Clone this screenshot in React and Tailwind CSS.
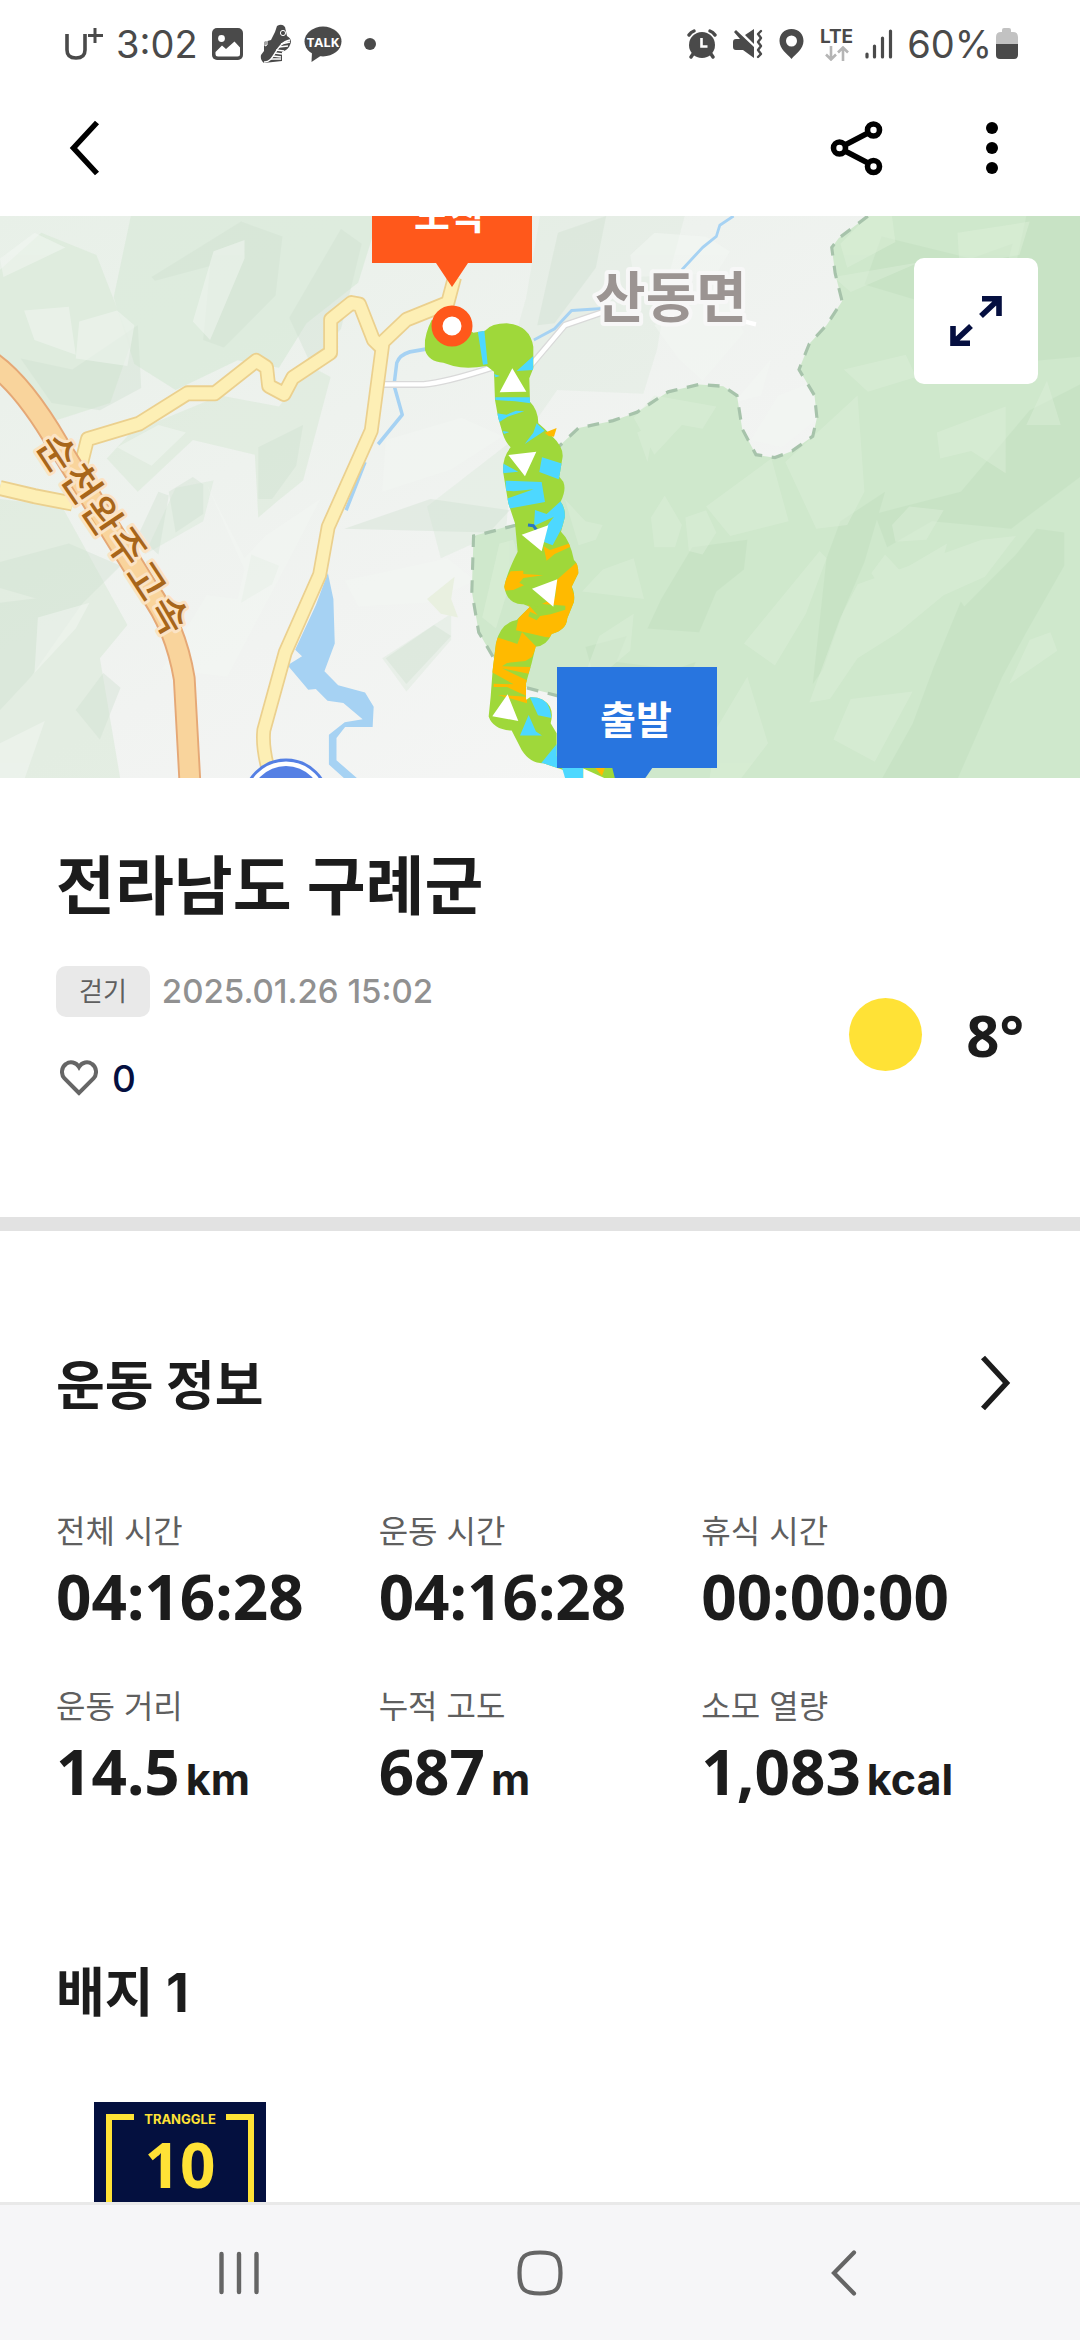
const SANS = "font-['Inter','Noto_Sans_CJK_KR',sans-serif]";

const stats = [
  { label: '전체 시간', value: '04:16:28' },
  { label: '운동 시간', value: '04:16:28' },
  { label: '휴식 시간', value: '00:00:00' },
  { label: '운동 거리', value: '14.5', unit: 'km' },
  { label: '누적 고도', value: '687', unit: 'm' },
  { label: '소모 열량', value: '1,083', unit: 'kcal' },
];

const highwayName = [
  ['순', 57, 237, 57],
  ['천', 81, 268, 56],
  ['완', 102, 300, 56],
  ['주', 126, 331, 55],
  ['고', 146, 365, 57],
  ['속', 169, 399, 60],
];

function StatusBar() {
  return (
    <div className="flex h-20 items-center justify-between pt-2 pr-[62px] pl-16 font-['Inter',sans-serif] text-[#4a4a4a]">
      <div className="flex items-center">
        <svg width="40" height="36" viewBox="0 0 40 36" fill="none" stroke="currentColor" role="img" aria-label="U+">
          <path d="M3 8v16c0 5 3 8 9 8s9-3 9-8V8" strokeWidth="3.6" />
          <path d="M31 2v15M24 9.500h15" strokeWidth="3" />
        </svg>
        <span className="ml-3 w-24 text-[38px] leading-none">3:02</span>
        <svg width="32" height="32" viewBox="0 0 32 32" aria-hidden="true">
          <rect width="31" height="32" rx="5" fill="currentColor" />
          <circle cx="9.500" cy="10.500" r="3.400" fill="#fff" />
          <path d="M3.500 24 10 17.500l4 3.500 8.500-7.500 5.500 6V26q0 2.500-2.500 2.500H6Q3.500 28.500 3.500 26z" fill="#fff" />
        </svg>
        <svg className="ml-4" width="32" height="40" viewBox="0 0 32 40" aria-hidden="true">
          <path d="M17 2q5-3 8 1l2 9q4 2 4 6-1 5-5 8l-4 2 0 9-18 2q-4-3-3-8l3-4 0-9 7-2 4-8z" fill="currentColor" />
          <path d="M4 38c11 1 11-19 26-22" stroke="#fff" strokeWidth="1.400" fill="none" />
          <path d="M5 18v4l2-1v-4" stroke="#fff" strokeWidth="1" fill="none" />
          <circle cx="23" cy="9" r="2.600" fill="none" stroke="#fff" />
          <path d="m21 20 9-2m-11 5 9-1m-12 4 8 1m-9 2 7 1m-9 2 8 1m-10 2 10 0" stroke="#fff" strokeWidth="1.500" />
        </svg>
        <svg className="ml-3" width="38" height="38" viewBox="0 0 38 38" aria-label="카카오톡" role="img">
          <ellipse cx="19" cy="16.500" rx="18.500" ry="15" fill="currentColor" />
          <path d="M8 27 7.500 37 18 30z" fill="currentColor" />
          <text x="19" y="21.500" textAnchor="middle" fill="#fff" className="font-['Open_Sans',sans-serif] text-[13px] font-bold">TALK</text>
        </svg>
        <span className="ml-[22px] size-3 rounded-full bg-current" />
      </div>
      <div className="flex items-center">
        <svg width="30" height="30" viewBox="0 0 30 30" fill="none" aria-hidden="true">
          <circle cx="15" cy="16" r="13" fill="currentColor" />
          <path d="M2 6q2-3 5-4M28 6q-2-3-5-4" stroke="currentColor" strokeWidth="3.400" strokeLinecap="round" />
          <path d="m4 28 2-3M26 28l-2-3" stroke="currentColor" strokeWidth="3.400" strokeLinecap="round" />
          <path d="M14.500 9v8.500h6" stroke="#fff" strokeWidth="2.600" />
        </svg>
        <svg className="ml-4" width="30" height="30" viewBox="0 0 30 30" aria-hidden="true">
          <path d="M0 13q0-3 3-3h4l-6-7 2-2 18 17v11L10 21H3q-3 0-3-3zM12 6l9-6v15z" fill="currentColor" />
          <path d="m28 2-3 3 3 4-3 4 3 4-3 4 3 4-3 3" fill="none" stroke="currentColor" strokeWidth="2.400" strokeLinecap="round" strokeLinejoin="round" />
        </svg>
        <svg className="ml-4" width="25" height="30" viewBox="0 0 25 30" aria-hidden="true">
          <path fillRule="evenodd" d="M12.500 0C5 0 .5 5 .5 12c0 8 8 13 12 18 4-5 12-10 12-18 0-7-4.500-12-12-12zm0 6.500a5.500 5.500 0 1 1 0 11 5.500 5.500 0 0 1 0-11z" fill="currentColor" />
        </svg>
        <div className="ml-4 flex flex-col items-center">
          <span className="text-[19px] leading-[18px] font-bold">LTE</span>
          <svg width="24" height="15" viewBox="0 0 24 15" fill="none" stroke="#b5b5b5" strokeWidth="2.600" aria-hidden="true">
            <path d="M6 0v13M1 8.500 6 13.500l5-5M18 15V2M13 6.500 18 1.500l5 5" />
          </svg>
        </div>
        <svg className="ml-3" width="28" height="30" viewBox="0 0 28 30" stroke="currentColor" strokeWidth="3.200" strokeLinecap="round" aria-hidden="true">
          <path d="M2 25v3M9.500 17v11M17.500 9v19M25.500 2v26" />
        </svg>
        <span className="ml-3.5 text-[38px] leading-none">60%</span>
        <svg className="ml-1" width="22" height="32" viewBox="0 0 22 32" aria-hidden="true">
          <path d="M6 4V2q0-2 2-2h5q2 0 2 2v2h2q5 0 5 5v7H0V9q0-5 5-5z" fill="#c2c2c2" />
          <path d="M0 16h22v11q0 4-4 4H4q-4 0-4-4z" fill="currentColor" />
        </svg>
      </div>
    </div>
  );
}

function Header() {
  return (
    <header className="flex h-[136px] items-center justify-between px-14">
      <button type="button" aria-label="뒤로" className="flex h-20 w-14 items-center pl-3">
        <svg width="32" height="56" viewBox="0 0 32 56" fill="none" stroke="#000" strokeWidth="5.500">
          <path d="M29 2.500 5.500 28 29 53.500" />
        </svg>
      </button>
      <div className="flex items-center gap-16">
        <button type="button" aria-label="공유" className="flex h-20 w-20 items-center justify-center">
          <svg width="54" height="56" viewBox="0 0 54 56" fill="none" stroke="#000" strokeWidth="5.600">
            <circle cx="10.500" cy="28" r="6" />
            <circle cx="44.500" cy="10" r="6" />
            <circle cx="44.500" cy="46.500" r="6" />
            <path d="m16 25 23-12M16 31l23 12" />
          </svg>
        </button>
        <button type="button" aria-label="더보기" className="flex h-20 w-16 flex-col items-center justify-center gap-2">
          <span className="size-3 rounded-full bg-black" />
          <span className="size-3 rounded-full bg-black" />
          <span className="size-3 rounded-full bg-black" />
        </button>
      </div>
    </header>
  );
}

function RouteMap() {
  return (
    <svg className="block size-full" viewBox="0 0 1080 562" preserveAspectRatio="xMidYMid slice" role="img" aria-label="이동 경로 지도">
      <defs>
        <linearGradient id="land" x1="0" y1="0" x2="1" y2="1">
          <stop offset="0" stopColor="#e8f0e8" />
          <stop offset="0.500" stopColor="#f1f3f1" />
          <stop offset="1" stopColor="#f8f8f8" />
        </linearGradient>
        <clipPath id="track">
          <path d="M185 90Q160 140 165 180 175 215 220 218L250 228Q290 238 350 228L372 245 375 330 385 385 398 430Q405 455 422 472 395 505 400 550L415 640 435 700 443 785Q410 850 403 890 412 945 460 943L480 950 440 990Q390 1000 378 1060L368 1140 362 1220 356 1280Q370 1320 425 1322L455 1380Q480 1420 520 1420L580 1440H640L560 1400V1330L542 1300Q550 1270 540 1250 520 1220 480 1222L468 1230V1180L485 1120 497 1070Q530 1068 545 1032 590 1020 592 985L612 935Q615 905 605 890L625 850Q625 820 612 810 600 750 573 725L585 680Q585 650 572 635 590 600 580 575L568 560 578 500Q580 470 548 440L522 415 505 400Q505 360 480 335L478 265 490 235 490 170Q480 105 410 100 365 100 345 122L310 128 240 80Z" />
        </clipPath>
      </defs>
      <rect width="1080" height="562" fill="url(#land)" />
      <g transform="matrix(0.3444 0 0 0.37 0 -5.5)">
        {/* lowland terrain */}
        <g fill="#dae9d9">
          <path opacity=".75" d="M380 15h720l-60 180-150 110-80 120-120-20-180 80-120-70-60-180z" />
          <path opacity=".7" d="M0 160 120 60l160 60 100 240-60 160-200 60L0 400z" />
          <path opacity=".6" d="M380 600 640 500l170 30 90-110 60 30-80 280-80 60-50 40-10-170-180-40-160 140-90-90z" />
          <path opacity=".6" d="M0 780 180 800l190 320-80 90 60 330H0z" />
          <path opacity=".5" d="M420 930 590 840l30-110-110 20zM700 1060l30-130 80 30-20 50z" />
          <path opacity=".4" d="M1110 1210 1310 1090v70l-130 140zM1240 800l250-180-20 240-190 80z" />
          <path opacity=".35" d="M1568 15h420l-40 140-40 220-40 120-250-10-90 120-80-110 80-260z" />
        </g>
        <g fill="#cfe0d0" opacity=".38">
          <path d="M440 180 700 30l120 40-20 160-150 140-60-20 20-200-160 40z" />
          <path d="m840 290 150-240 60 40-60 230-90 90z" />
          <path d="m60 400 150 30 190-120 10 170-120 60-140-20zM0 950l200-50 150 60-130 120L0 1020z" />
          <path d="m0 1060 180-20 60 20-150 200-90 90zM220 1350l80-100 50 40-60 140z" />
          <path d="m490 760 70-40 30 20v80l-80 50zM1000 860l250-80 230 30-60 60z" />
          <path d="m1560 310 60-250 140-45-30 140-120 150z" />
          <path d="m750 640 130-60-20 110-70 90h-40zM400 880l60-120 30 10-30 160zM1120 1210l140-90 50 30-130 130z" />
        </g>
        <g fill="#f3f7f3" opacity=".5">
          <path d="m560 300 60-190 90-30v50l-100 220zM0 130l100-70 90 40-180 80z" />
          <path d="m70 270 130-10 20 130-120-40zM230 300l110-30 50 40-20 110-150-20z" />
          <path d="m600 740 110 230-20 80-90-10-130 200 190 20 170-300 100-180-160 100-60 60z" />
          <path d="m1120 620 220-60 120 50-150 90-200 60zM1000 1000l300-60 80 60-140 60-200 10z" />
          <path d="m0 1440 130-60-60 160H0zM110 1100l150-40-40 70-120 120z" />
          <path d="m1830 120 70-60 150 10 70 40-40 60-240 10zM1900 310l200-100 60 120-120 130-70-60zM2130 520l110-120-30 100z" />
          <path d="m2180 620 80-120 110-40 20 90-120 90zM340 640l120-60 80 20-100 90z" />
        </g>
        <path d="m1240 1050 80-60-10 60 20 50-50-10z" fill="#e9f0e0" />

        {/* national park */}
        <path d="M2520 15 2435 75 2415 100 2425 170 2445 245 2400 310 2350 360 2320 430 2365 500 2372 560 2360 610 2300 650 2250 668 2195 660 2155 590 2140 500 2100 475 2030 470 1940 490 1850 545 1780 568 1680 588 1620 640 1560 830 1470 855 1375 880 1370 1030 1390 1140 1440 1220 1530 1290 1620 1310 1700 1537H3136V15z" fill="#cfe8cc" />
        <g fill="#bddbbb" opacity=".36">
          <path d="M2980 15h156v380l-240 20 40-210z" />
          <path d="m1880 1130 40-80 90-140 160-20-10 80-80 60-50 110zM2400 940l40-100 130-80-60 190-60 130-60 160-30 40z" />
          <path d="m2800 1070 150-140 60-70 80 10v90l-110 180-70 120-130 277H2560l90-150 60-150 80-180z" />
          <path d="m2540 820 250-60 200-220 146-70v250l-200 140-230-20-130 70zM1700 1180l120-30-30 70 170 20 60-20-60 130-90 187h-60z" />
          <path d="m2560 70 260 60 120-40-50 180-100 90-100-110-180-50z" />
        </g>
        <g fill="#dff0dc" opacity=".42">
          <path d="M2440 90 2520 15h70l10 70-140 70zM2420 180l250-40-200 80zM2780 60l210-30-30 90-120 20-50 70z" />
          <path d="m1640 780 60 60 50 10-20 40-50 15zM1900 910l-10-80 40-60 50 80-20 60zM1990 830l60-20 30 60-40 60-40-10z" />
          <path d="m2050 800 190-130 50 170-170 40zM2280 680l210-180 20 260-50 90-90 10z" />
          <path d="m1840 560 60-60 180 30-40 60-60-10-80 80zM1850 600l50-20-20 100z" />
          <path d="m2590 850 50-50 100 10-50 80-90 5zM2530 980l40-50 50 50-50 60zM2640 960l110-60-20 70-70 10z" />
          <path d="m2350 1330 90-230 50-90 150-50 210-70 100-10-90 110-120 50-130 100-120 70-80 110z" />
          <path d="m2420 1430 50-110 180-20-110 190zM2930 1280l60-120 60-20 20 50zM2980 580l60-120 40 120zM2450 430l180-40 30 60-140 40z" />
          <path d="m2160 1170 220-250 20 20-60 150-90 140zM1690 1030l60-60 90-30 30 110zM2720 600l200-70v180l-100-60-90 20z" />
          <path d="m1700 1250 40-100 100-60-10 100-90 70zM2080 1400l90-140 60 180-80 97h-90z" />
          <path d="m1450 900 40-10 20 60-40 90-30 90-40-30z" />
        </g>
        <path d="M2520 15 2435 75 2415 100 2425 170 2445 245 2400 310 2350 360 2320 430 2365 500 2372 560 2360 610 2300 650 2250 668 2195 660 2155 590 2140 500 2100 475 2030 470 1940 490 1850 545 1780 568 1680 588 1620 640M1500 850 1375 880 1370 1030 1390 1140 1440 1220M1530 1290l90 22" fill="none" stroke="#a7c3ab" strokeWidth="9" strokeDasharray="34 28" />

        {/* water */}
        <g fill="none" stroke="#a6d2f3" strokeLinejoin="round">
          <path d="m1240 374-50 8q-30 8-38 30l-8 60 24 80-70 80M1060 680l-55 130" strokeWidth="10" />
          <path d="m1550 350 60-30 50-50 90-5M1980 160l60-60 40-30 10-30 40-25" strokeWidth="8" />
        </g>
        <path d="m952 980 16 70 4 120-30 75 40 38 78 20 25 38-3 55h-80l-25 30v60l68 55h-38l-52-44v-80l46-34 52-8-56-44-46-6-34-32-22 2-60-66 42-24-20-18 60-120z" fill="#a6d2f3" />

        {/* roads */}
        <g fill="none" strokeLinejoin="round">
          <path d="M1110 470h120q60-4 200-46M1540 420l100-110 110-35" stroke="#d9d9d9" strokeWidth="19" />
          <path d="M1110 470h120q60-4 200-46M1540 420l100-110 110-35M2120 290l75 18" stroke="#fff" strokeWidth="12" />
          <g stroke="#ebd08e" strokeWidth="43">
            <path d="m0 750 100 22 110 20M232 700l22-82 150-42 140-82h80l120-88 30 18 6 50 45 22 25-44 110-68V295l60-45 24 4 40 95 20 18" />
            <path d="m1320 180-20 70-120 45-68 60-34 240-125 260-25 130-100 210-62 210q-6 50 20 130" />
          </g>
          <g stroke="#fdefb5" strokeWidth="33">
            <path d="m0 750 100 22 110 20M232 700l22-82 150-42 140-82h80l120-88 30 18 6 50 45 22 25-44 110-68V295l60-45 24 4 40 95 20 18" />
            <path d="m1320 180-20 70-120 45-68 60-34 240-125 260-25 130-100 210-62 210q-6 50 20 130" />
          </g>
          <path d="M-20 415q90 60 190 220l260 390q80 100 105 240l17 290" stroke="#e5a876" strokeWidth="66" />
          <path d="M-20 415q90 60 190 220l260 390q80 100 105 240l17 290" stroke="#f9d49c" strokeWidth="55" />
        </g>
      </g>

      {/* recorded track */}
      <g transform="matrix(0.3333 0 0 0.3333 370 74)">
        <g clipPath="url(#track)">
          <path d="M150 70h500v1400H150z" fill="#9fd83a" />
          <path
            fill="#4dd8ff"
            d="m323 122 20-2 10 102-14 2zM440 243l50-45v42zM372 252l18 6-14 4zM376 322h105v18l-45-6-60-4zM380 370l30 4 28-12 25 2-50 16-28 18zM398 423l20 3-16 6zM500 400l24 22-60 40 26-34zM398 520l47 25-47 5zM516 502l64 20-14 46-58-22zM407 572l108 4 10 60-110 20-4-30 80-28-60 6-24-2zM495 660l35 12 42-38 18 14v40l-42 78-26-10 10-50 20-26-60 28zM478 1218q60-5 66 66l-40-8zM476 1275l22 50 18 12h-66zM564 1358v82l-54-16z"
          />
          <path
            fill="#ffba00"
            d="m520 768 20 12 60-20 2 10-48 22-24 20zM398 884l24-40 38-2v10l60 4-60 8-12 14 14 8-32 14-32 2zM560 870l70-62 4 40-28 47 10 30-8 50-14 8-8 34q-20 30-60 24l-88-20 8-40 30-36 30 34 36-6 44-14v-12l-70-5 40-20zM376 1040l66 22 14-36 44 45-14 30-20 12-55 6-15 10 86 2-6 20-80-16 75 36v48l-60-28h-40v-10l60 2-65-36zM384 1215l87 5v20z"
          />
          <path d="m480 965 30 14-10 12-25-12zM480 945l25 5-12 10z" fill="#9fd83a" />
        </g>
        <path d="m524 428 36-14-8 26-16-2z" fill="#ffba00" />
        <path d="m474 705 16 2 9 12" fill="none" stroke="#2a75c4" strokeWidth="9" />
        <path d="m427 235 42 70-80 2zM415 495l84-10-34 74zM455 734l80-28-20 78zM486 896l76-28-12 82zM413 1213l32 80-78-14z" fill="#fff" />
        <path d="M575 1430h70v40h-58z" fill="#4dd8ff" />
        <path d="M640 1430h105v40H640z" fill="#9fd83a" />
        <path d="M672 1430h34l-10 28z" fill="#ffba00" />
        <path d="m640 1436 76 34h-76z" fill="#fff" />
        <path d="M726 1430h124l-28 40h-86z" fill="#2875df" />
      </g>

      {/* station at the lower edge */}
      <circle cx="286" cy="586" r="42" fill="#fff" stroke="#5580e4" strokeWidth="3" />
      <circle cx="286" cy="586" r="36" fill="#5580e4" />

      {/* place names */}
      <g className="font-['Noto_Sans_CJK_KR',sans-serif]" textAnchor="middle">
        {highwayName.map(([ch, x, y, angle]) => (
          <text key={ch} transform={`translate(${x} ${y}) rotate(${angle})`} y="14" className="text-[40px] font-medium" fill="#a8661a" stroke="#fbe3c4" strokeWidth="6" paintOrder="stroke" strokeLinejoin="round">
            {ch}
          </text>
        ))}
        <text x="671" y="101" className="text-[55px] font-bold" fill="#9b9492" stroke="#f7f7f7" strokeWidth="8" paintOrder="stroke" strokeLinejoin="round">
          산동면
        </text>
        <rect x="557" y="451" width="160" height="101" fill="#2875df" />
        <text x="636" y="518" className="text-[39px] font-bold" fill="#fff">
          출발
        </text>
        <path d="M372-20h160v67h-64l-16 24-16-24h-64z" fill="#ff581b" />
        <text x="450" y="13" className="text-[39px] font-bold" fill="#fff">
          도착
        </text>
      </g>
      <circle cx="452" cy="110" r="15" fill="#fff" stroke="#ff581b" strokeWidth="11" />
    </svg>
  );
}

function Chevron() {
  return (
    <svg width="32" height="56" viewBox="0 0 32 56" fill="none" stroke="#1c1c1c" strokeWidth="5.500">
      <path d="M3 2.500 26.500 28 3 53.500" />
    </svg>
  );
}

export default function App() {
  return (
    <div className={`flex h-screen flex-col overflow-hidden bg-white text-[#1c1c1c] ${SANS}`}>
      <StatusBar />
      <Header />
      <main className="min-h-0 flex-1 overflow-y-auto [scrollbar-width:none]">
        <div className="relative h-[562px] overflow-hidden">
          <RouteMap />
          <button type="button" aria-label="지도 확대" className="absolute top-[42px] right-[42px] flex h-[126px] w-[124px] items-center justify-center rounded-[10px] bg-white">
            <svg width="52" height="52" viewBox="0 0 52 52" fill="none" stroke="#050f40" strokeWidth="5.600">
              <path d="M32 3.800h17V21M48 5 31 21M20 48.200H3V31M4 47l17-16" />
            </svg>
          </button>
        </div>

        <section className="px-14 pt-[72px] pb-28">
          <h1 className="text-[64px] leading-[72px] font-bold">전라남도 구례군</h1>
          <div className="mt-11 flex items-center justify-between">
            <div className="flex flex-col gap-9">
              <div className="flex items-center gap-3">
                <span className="flex h-[51px] items-center rounded-[10px] bg-[#e9e9e9] px-[23px] text-[26px] leading-none text-[#5f5f5f]">걷기</span>
                <time className="text-[33px] leading-none font-medium text-[#919191]">2025.01.26 15:02</time>
              </div>
              <button type="button" aria-label="좋아요 0" className="flex h-[50px] items-center self-start pl-1">
                <svg width="38" height="36" viewBox="0 0 38 36" fill="none" stroke="#666" strokeWidth="4">
                  <path d="M19 33 4.500 18.500C.5 14 1.500 7 6 4c4-3 10-2 13 3 3-5 9-6 13-3 4.500 3 5.500 10 1.500 14.500z" />
                </svg>
                <span className="ml-3.5 text-[37px] leading-none font-medium text-[#050f40]">0</span>
              </button>
            </div>
            <div className="flex items-center gap-11">
              <span className="size-[73px] rounded-full bg-[#ffe236]" role="img" aria-label="맑음" />
              <span className="font-['Noto_Sans',sans-serif] text-[58px] leading-none font-bold">8°</span>
            </div>
          </div>
        </section>

        <div className="mt-0.5 h-[14px] bg-[#e2e2e2]" />

        <section className="px-14 pt-[119px]">
          <div className="flex items-center justify-between">
            <h2 className="text-[53px] leading-[72px] font-bold">운동 정보</h2>
            <button type="button" aria-label="운동 정보 더보기" className="flex h-[72px] w-11 items-center pb-1.5">
              <Chevron />
            </button>
          </div>
          <dl className="mt-[90px] grid grid-cols-3 gap-y-[59px]">
            {stats.map((s) => (
              <div key={s.label} className="whitespace-nowrap">
                <dt className="text-[32px] leading-10 text-[#5f5f5f]">{s.label}</dt>
                <dd className="mt-3 flex h-16 items-baseline gap-1.5 font-bold">
                  <span className="font-['Noto_Sans',sans-serif] text-[62px] leading-[64px]">{s.value}</span>
                  {s.unit && <span className="text-[43px] leading-[64px]">{s.unit}</span>}
                </dd>
              </div>
            ))}
          </dl>
        </section>

        <section className="px-14 pt-[154px] pb-14">
          <h2 className="text-[53px] leading-[72px] font-bold">배지 1</h2>
          <div className="mt-[73px] ml-[38px] h-[172px] w-[172px] bg-[#04103f] px-3 pt-3 text-[#ffe236]">
            <div className="flex h-[148px] flex-col items-center border-6 border-t-0 border-[#ffe236]">
              <div className="flex w-full items-start justify-between">
                <span className="h-1.5 w-[22px] bg-current" />
                <span className="text-[13px] leading-2.5 font-bold">TRANGGLE</span>
                <span className="h-1.5 w-[22px] bg-current" />
              </div>
              <span className="mt-2.5 font-['Noto_Sans',sans-serif] text-[62px] leading-[60px] font-bold">10</span>
            </div>
          </div>
        </section>
      </main>

      <nav className="grid h-[138px] shrink-0 grid-cols-[1fr_124px_1fr] items-center border-t-3 border-[#e9e9e9] bg-[#f6f6f8] px-[156px]">
        <button type="button" aria-label="최근 앱" className="flex h-20 w-[166px] items-center justify-center">
          <svg width="42" height="44" viewBox="0 0 42 44" stroke="#656565" strokeWidth="4.400" strokeLinecap="round">
            <path d="M3.500 3v38M21 3v38M38.500 3v38" />
          </svg>
        </button>
        <button type="button" aria-label="홈" className="flex h-20 items-center justify-center">
          <svg width="48" height="48" viewBox="0 0 48 48" fill="none" stroke="#656565" strokeWidth="4.200">
            <path d="M24 3.500c15 0 20.500 3 20.500 20.500S39 44.500 24 44.500 3.500 41.500 3.500 24 9 3.500 24 3.500z" />
          </svg>
        </button>
        <button type="button" aria-label="이전" className="flex h-20 w-40 items-center justify-center justify-self-end">
          <svg width="28" height="48" viewBox="0 0 28 48" fill="none" stroke="#656565" strokeWidth="4.200" strokeLinecap="round">
            <path d="M24 3.500 4 24l20 20.500" />
          </svg>
        </button>
      </nav>
    </div>
  );
}
